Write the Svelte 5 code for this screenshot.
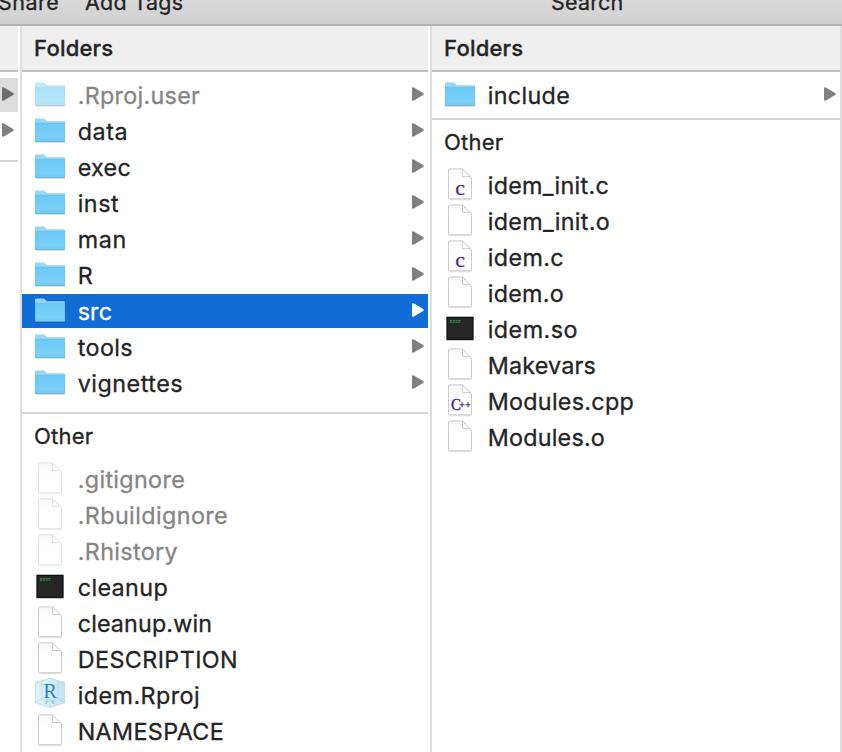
<script>
  const w = (name, width, kind = 'doc', opts = {}) => ({ name, width, kind, ...opts });
  const folders = [
    w('.Rproj.user', 121, 'folder', { dim: true }),
    w('data', 49, 'folder'), w('exec', 52, 'folder'), w('inst', 40, 'folder'),
    w('man', 48, 'folder'), w('R', 15, 'folder'),
    w('src', 33, 'folder', { selected: true }),
    w('tools', 54, 'folder'), w('vignettes', 104, 'folder')
  ];
  const others = [
    w('.gitignore', 106, 'doc', { dim: true }),
    w('.Rbuildignore', 149, 'doc', { dim: true }),
    w('.Rhistory', 99, 'doc', { dim: true }),
    w('cleanup', 89, 'exec'), w('cleanup.win', 133),
    w('DESCRIPTION', 159), w('idem.Rproj', 121, 'rproj'), w('NAMESPACE', 145)
  ];
  const sources = [
    w('idem_init.c', 120, 'c'), w('idem_init.o', 121), w('idem.c', 75, 'c'),
    w('idem.o', 75), w('idem.so', 89, 'exec'), w('Makevars', 107),
    w('Modules.cpp', 145, 'cpp'), w('Modules.o', 116)
  ];

  // Tracks a label so that its glyphs span the given width.
  function fit(node, width) {
    const apply = () => {
      node.style.letterSpacing = '0px';
      const natural = node.getBoundingClientRect().width;
      node.style.letterSpacing = `${(width + 1.4 - natural) / node.textContent.length}px`;
    };
    apply();
    document.fonts?.ready.then(apply);
  }
</script>

{#snippet arrow()}
  <svg class="arrow" width="12" height="14" viewBox="0 0 12 14"><path d="M0 1Q0 0 1.5 .3L11.5 6.2Q12.2 7 11.5 7.8L1.5 13.7Q0 14 0 13Z" /></svg>
{/snippet}

{#snippet icon(kind)}
  <svg class="icon" width="30" height="34" viewBox="0 0 30 34">
    {#if kind === 'folder'}
      <path d="M.5 28.2h29" stroke="#000" stroke-opacity=".13" stroke-width="1.6" />
      <path d="M0 5.4Q0 4.4 1 4.4H8.5Q9.5 4.4 10.3 5.7L11.8 7.2H29Q30 7.2 30 8.2V27.6H0Z" fill="#93d6f7" />
      <path d="M.4 9.6H29.6V27.4H.4Z" fill="url(#folder)" />
      <path d="M.4 9.4H29.6M.4 8V27.5M29.6 8V27.5" stroke="#5db7e0" stroke-opacity=".7" stroke-width=".8" />
      <path d="M0 25H30" stroke="#4fa9d5" stroke-opacity=".4" stroke-width=".7" />
      <path d="M0 27.4H30" stroke="#4a9fc9" stroke-opacity=".8" stroke-width=".9" />
    {:else if kind === 'exec'}
      <rect x="1" y="6" width="28" height="23" rx="1" fill="#000" opacity=".2" />
      <rect x="1.2" y="4.2" width="27.6" height="23.8" fill="#b9cbd1" />
      <rect x="2" y="5.4" width="26" height="22" fill="#262626" stroke="#080808" />
      <path d="M5 8.7h2.2m.6 0H10m.6 0h2.2m.6 0h2.2M5 10.2h2.2m.6 0H10m.6 0h2.2m.6 0h1.4" stroke="#36a846" stroke-width=".9" />
    {:else if kind === 'rproj'}
      <path d="M15 .4L29.6 4.6V24.8L15 29.7L.4 24.8V4.6Z" fill="url(#cube)" stroke="#b3dbe6" stroke-width=".8" />
      <path d="M.5 4.7L15 8.2L29.5 4.7M.5 24.7L7 21H23L29.5 24.7M7 21V3M23 21V3M15 29V24" fill="none" stroke="#94c9d9" stroke-opacity=".5" stroke-width=".8" />
      <text x="15.2" y="19.5" text-anchor="middle" font-size="20.5" fill="#2589d0">R</text>
      <path d="M10.5 23H14.5M12.5 23L10.5 26M16 23H20M17.5 23V24.5L19 26" fill="none" stroke="#80bfe0" stroke-width="1.2" />
    {:else}
      <path d="M3.5 31.6h23" stroke="#000" stroke-opacity=".1" stroke-width="1.4" />
      <path d="M4.6 .9H17.5L26.5 9.7V29.8Q26.5 30.7 25.6 30.7H4.4Q3.5 30.7 3.5 29.8V1.9Q3.5 .9 4.6 .9Z" fill="url(#paper)" stroke="#cbcbcb" />
      <path d="M17.6 1.2V8.6H25.4Z" fill="#fff" stroke="#cfcfcf" stroke-width="1" />
      {#if kind === 'c'}
        <text x="10.2" y="26.6" font-size="22" textLength="9.8" lengthAdjust="spacingAndGlyphs" fill="#4b2684" stroke="#4b2684" stroke-width=".2">c</text>
      {:else if kind === 'cpp'}
        <text x="6" y="26" font-size="16.5" textLength="10" lengthAdjust="spacingAndGlyphs" fill="#4b2684" stroke="#4b2684" stroke-width=".4">C</text>
        <path d="M14.6 20.8H19.6M17.1 18.3V23.3M20.5 20.8H25.5M23 18.3V23.3" stroke="#4b2684" stroke-width="1.1" />
      {/if}
    {/if}
  </svg>
{/snippet}

{#snippet rows(items)}
  <ul>
    {#each items as item}
      <li class:dim={item.dim} class:selected={item.selected}>
        {@render icon(item.kind)}
        <span class="name"><span use:fit={item.width}>{item.name}</span></span>
        {#if item.kind === 'folder'}{@render arrow()}{/if}
      </li>
    {/each}
  </ul>
{/snippet}

<svg class="defs" width="0" height="0" aria-hidden="true">
  <defs>
    <linearGradient id="folder" x1="0" y1="0" x2="0" y2="1"><stop stop-color="#6acaf6" /><stop offset="1" stop-color="#80d3f7" /></linearGradient>
    <linearGradient id="paper" x1="0" y1="0" x2="0" y2="1"><stop stop-color="#f8f8f8" /><stop offset=".45" stop-color="#fff" /></linearGradient>
    <linearGradient id="cube"><stop stop-color="#e2f3f8" /><stop offset=".5" stop-color="#d8eef7" /><stop offset="1" stop-color="#c0e4f1" /></linearGradient>
  </defs>
</svg>

<div class="window">
  <header>
    <span class="share"><span use:fit={60}>Share</span></span>
    <span class="tags"><span use:fit={97}>Add Tags</span></span>
    <span class="search"><span use:fit={71}>Search</span></span>
  </header>
  <main>
    <section class="parent">
      <h2></h2>
      <ul>
        <li class="current">{@render arrow()}</li>
        <li>{@render arrow()}</li>
      </ul>
      <div class="rule"></div>
    </section>
    <section class="middle">
      <h2><span use:fit={78}>Folders</span></h2>
      {@render rows(folders)}
      <div class="rule"></div>
      <h3><span use:fit={58}>Other</span></h3>
      {@render rows(others)}
    </section>
    <section class="last">
      <h2><span use:fit={78}>Folders</span></h2>
      {@render rows([w('include', 81, 'folder')])}
      <div class="rule"></div>
      <h3><span use:fit={58}>Other</span></h3>
      {@render rows(sources)}
    </section>
  </main>
</div>

<style>
  .defs { position: absolute; }
  .window { display: flex; flex-direction: column; width: 842px; height: 752px; overflow: hidden; background: #fff; color: #242424; font-family: Inter, "Liberation Sans", sans-serif; font-size: 23.3px; white-space: nowrap; -webkit-text-stroke: .3px currentColor; }
  header { display: flex; flex: none; box-sizing: border-box; height: 26px; border-bottom: 2px solid #b2b2b2; background: linear-gradient(#d9d9d9, #d1d1d1); font-size: 21.5px; line-height: 26px; overflow: hidden; }
  header > span { margin-top: -11px; }
  .share { width: 87px; margin-left: -2px; }
  .tags { width: 466px; }
  main { display: flex; flex: 1; min-height: 0; }
  section { box-sizing: border-box; flex: none; border-right: 2px solid #dedede; }
  .parent { width: 22px; padding-right: 2px; }
  .middle { width: 410px; padding-right: 2px; }
  .last { width: 410px; }
  h2, h3 { margin: 0; box-sizing: border-box; padding-left: 12px; }
  h2 { height: 46px; border-bottom: 2px solid #bfbfbf; background: #efefef; font-size: 22px; font-weight: 500; line-height: 44px; }
  h3 { height: 48px; font-size: 22px; font-weight: 400; line-height: 45px; }
  ul { display: flex; flex-direction: column; gap: 2px; margin: 0; padding: 0; list-style: none; }
  h2 + ul { padding-top: 6px; }
  li { display: flex; align-items: center; box-sizing: border-box; height: 34px; padding: 0 4px 0 13px; }
  .parent li { padding-left: 2px; }
  .current { background: #dcdcdc; }
  .current .arrow { fill: #6d6d6d; }
  .name { flex: 1; padding-left: 12.7px; line-height: 35px; }
  .icon, .arrow { display: block; flex: none; overflow: visible; }
  .icon text { font-family: "Liberation Serif", serif; -webkit-text-stroke: 0; }
  .arrow { fill: #808080; margin-bottom: 2px; }
  .dim .name { color: #858585; }
  .dim .icon { opacity: .55; }
  .selected { background: #116cd6; color: #fff; }
  .selected .arrow { fill: #fff; }
  .rule { height: 2px; margin-top: 12px; background: #d5d5d5; }
  .last .rule { margin-top: 6px; }
</style>
